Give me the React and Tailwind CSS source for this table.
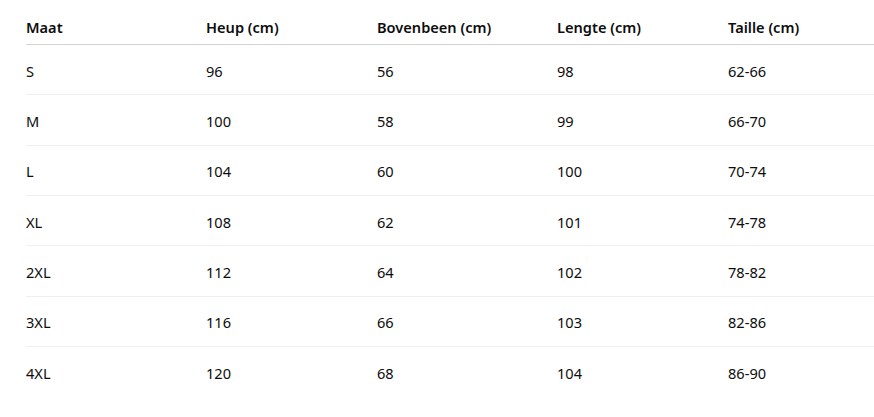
import React from "react";

const rows = [
  ["S", "96", "56", "98", "62-66"],
  ["M", "100", "58", "99", "66-70"],
  ["L", "104", "60", "100", "70-74"],
  ["XL", "108", "62", "101", "74-78"],
  ["2XL", "112", "64", "102", "78-82"],
  ["3XL", "116", "66", "103", "82-86"],
  ["4XL", "120", "68", "104", "86-90"],
];

const headers = ["Maat", "Heup (cm)", "Bovenbeen (cm)", "Lengte (cm)", "Taille (cm)"];
const cols = "grid grid-cols-[180px_171px_180px_171px_1fr]";

export default function App() {
  return (
    <div
      className="min-h-screen bg-white pl-[26px] pt-[10px] text-[14.6px] text-[#0d0d0d]"
      style={{ fontFamily: '"Noto Sans", "Open Sans", sans-serif' }}
    >
      {/* header */}
      <div className={`${cols} h-[35px] items-center border-b border-[#d4d4d4] font-semibold`}>
        {headers.map((h) => (
          <div key={h} className="leading-5">
            {h}
          </div>
        ))}
      </div>
      {/* body */}
      {rows.map((r, i) => (
        <div
          key={r[0]}
          className={`${cols} h-[50.33px] items-center pt-[2px] ${
            i < rows.length - 1 ? "border-b border-[#efefef]" : ""
          }`}
        >
          {r.map((c, j) => (
            <div key={j} className="leading-5">
              {c}
            </div>
          ))}
        </div>
      ))}
    </div>
  );
}
